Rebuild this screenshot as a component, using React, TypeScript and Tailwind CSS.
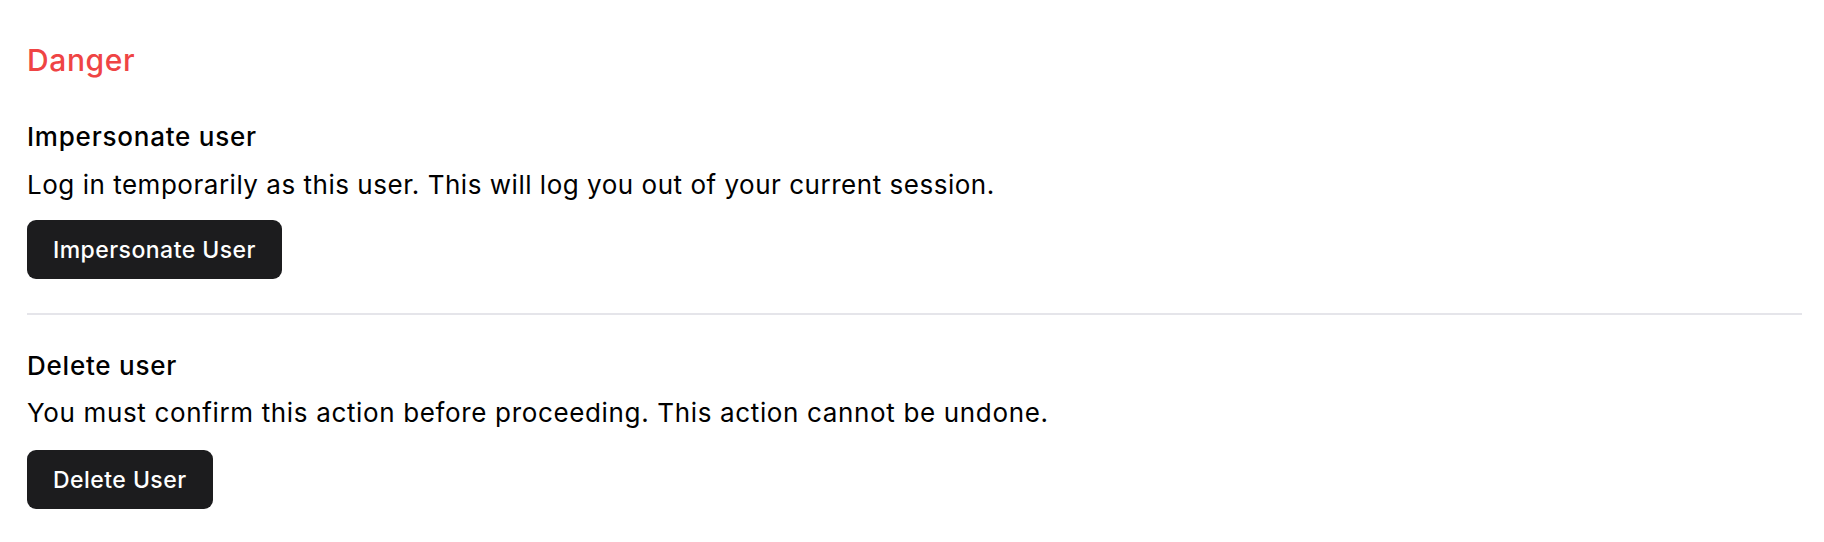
export default function App() {
  return (
    <div
      className="min-h-screen bg-white pl-[27px] pr-[22px] pt-[42px] text-black"
      style={{ fontFamily: "Inter, 'Noto Sans', sans-serif" }}
    >
      <h2 className="text-[30px] leading-[36px] font-medium tracking-[0.02em] text-[#ef4444]">Danger</h2>

      <section className="mt-[43px]">
        <h3 className="text-[26px] leading-[32px] font-medium tracking-[0.03em]">Impersonate user</h3>
        <p className="mt-[16px] text-[26px] leading-[32px] tracking-[0.02em]">
          Log in temporarily as this user. This will log you out of your current session.
        </p>
        <button className="mt-[19px] flex h-[59px] items-center rounded-[9px] bg-[#1c1c1e] px-[26px] pt-[2px] text-[23px] font-medium tracking-[0.02em] text-white">
          Impersonate User
        </button>
      </section>

      <hr className="mt-[34px] border-t-2 border-[#e5e5ea]" />

      <section className="mt-[35px]">
        <h3 className="text-[26px] leading-[32px] font-medium tracking-[0.03em]">Delete user</h3>
        <p className="mt-[15px] text-[26px] leading-[32px] tracking-[0.025em]">
          You must confirm this action before proceeding. This action cannot be undone.
        </p>
        <button className="mt-[21px] flex h-[59px] items-center rounded-[9px] bg-[#1c1c1e] px-[26px] pt-[2px] text-[23px] font-medium tracking-[0.02em] text-white">
          Delete User
        </button>
      </section>
    </div>
  );
}
